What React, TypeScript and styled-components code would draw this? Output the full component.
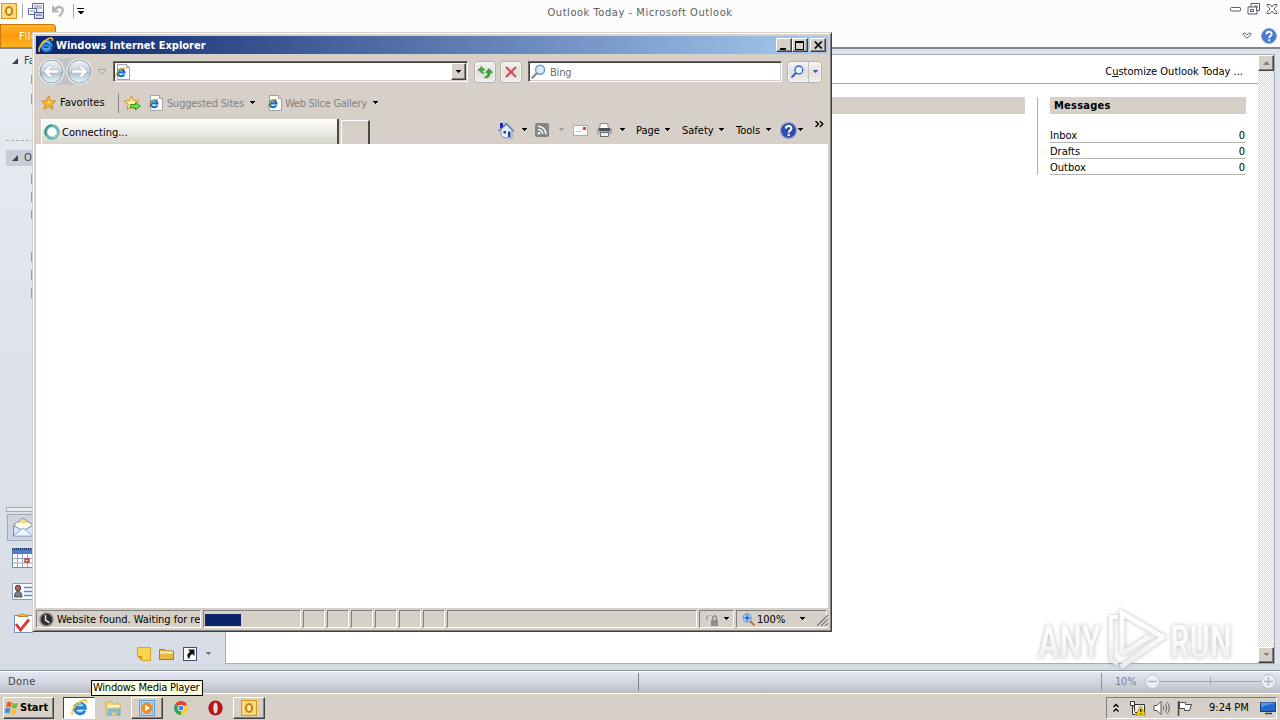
import React from 'react'
import styled, { createGlobalStyle, css } from 'styled-components'

const colors = {
    face: '#d6d0c8',
    shadow: '#808080',
    dark: '#404040',
    navy: '#0a246a',
    line: '#a9aeb4',
}

const GlobalStyle = createGlobalStyle`
    * {
        box-sizing: border-box;
    }
    body {
        margin: 0;
        overflow: hidden;
        font-family: 'DejaVu Sans Condensed', 'DejaVu Sans', sans-serif;
        font-stretch: condensed;
        font-size: 11px;
        line-height: 14px;
        color: #000;
    }
    svg {
        display: block;
        flex: none;
    }
`

const raised = css`
    border: 1px solid;
    border-color: #fff ${colors.dark} ${colors.dark} #fff;
    box-shadow: inset -1px -1px 0 ${colors.shadow};
`
const sunken = css`
    border: 1px solid;
    border-color: ${colors.shadow} #fff #fff ${colors.shadow};
`

/* ---------- shared ---------- */

const Text = styled.span<{ $w?: number; $ls?: number; $color?: string; $bold?: boolean; $drop?: boolean }>`
    flex: none;
    white-space: nowrap;
    overflow: visible;
    padding-top: ${({ $drop }) => ($drop ? 2 : 0)}px;
    width: ${({ $w }) => ($w ? `${$w}px` : 'auto')};
    letter-spacing: ${({ $ls }) => $ls ?? 0}px;
    color: ${({ $color }) => $color || '#000'};
    font-weight: ${({ $bold }) => ($bold ? 700 : 400)};
`
const Space = styled.div<{ $w?: number; $h?: number }>`
    flex: none;
    width: ${({ $w }) => $w || 0}px;
    height: ${({ $h }) => $h || 0}px;
`
const Caret: React.FC<{ color?: string }> = ({ color = '#000' }) => (
    <svg width="7" height="4" viewBox="0 0 7 4" shapeRendering="crispEdges">
        <path d="M0.5 0h6L3.5 3.5z" fill={color} />
    </svg>
)

/* ---------- icons ---------- */

const IeGlyph: React.FC<{ size: number }> = ({ size }) => (
    <svg width={size} height={size} viewBox="0 0 16 16">
        <path
            d="M12.9 10.6A4.700 4.700 0 1 1 13.2 8.400H4.6"
            fill="none"
            stroke="#2580d6"
            strokeWidth="3.200"
        />
        <path
            d="M11.9 9.8A4 4 0 0 1 5 10.5M5 6.3a4 4 0 0 1 6.8.4"
            fill="none"
            stroke="#7fcdfa"
            strokeWidth="1.100"
        />
        <path
            d="M1.6 14.6C-.6 12.2 4.1 4.8 9.7 2c3.4-1.7 5.6-1.4 4.4 1.7"
            fill="none"
            stroke="#f5c02e"
            strokeWidth="1.600"
        />
    </svg>
)

const IePage = () => (
    <svg width="15" height="16" viewBox="0 0 15 16">
        <path d="M2.5.5h9l3 3v12h-12z" fill="#fff" stroke="#9aa3ae" />
        <path d="M11.5.5v3h3" fill="#dde3ea" stroke="#9aa3ae" />
        <path d="M9.2 10.2A3.4 3.4 0 1 1 9.5 8.4H3.6" fill="none" stroke="#1c6fc4" strokeWidth="2.100" />
        <path d="M1 13C-.3 11 3 6.600 6.600 4.600c2-1 3.400-.8 2.800.8" fill="none" stroke="#e8b020" strokeWidth="1.1" />
    </svg>
)

const Star: React.FC<{ add?: boolean }> = ({ add }) => (
    <svg width={add ? 17 : 16} height="16" viewBox={add ? '0 0 17 16' : '0 0 16 16'}>
        <path
            d="M7.500 1l2 4.600 5 .4-3.800 3.300 1.200 5-4.400-2.700-4.400 2.700 1.200-5L.6 6l5-.4z"
            fill={add ? '#fff3ae' : '#f9b52c'}
            stroke="#d58a14"
        />
        {!add && <path d="M7.500 3l1.300 3.400 3.400.3-4.700 2z" fill="#ffe08a" />}
        {add && <path d="M6.500 9.500h5v-2l5 3.700-5 3.700v-2h-5z" fill="#6fda45" stroke="#2a9a1f" />}
    </svg>
)

const NavCircle: React.FC<{ flip?: boolean }> = ({ flip }) => (
    <svg width="27" height="27" viewBox="0 0 27 27">
        <defs>
            <linearGradient id="glass" x1="0" y1="0" x2="0" y2="1">
                <stop offset="0" stopColor="#f3f5f7" />
                <stop offset="0.48" stopColor="#c9d0d7" />
                <stop offset="0.52" stopColor="#adbac6" />
                <stop offset="1" stopColor="#e6f8fd" />
            </linearGradient>
        </defs>
        <circle cx="13.500" cy="13.500" r="13" fill="#f1f3f5" />
        <circle cx="13.500" cy="13.500" r="11.500" fill="url(#glass)" stroke="#8f9ba7" />
        <path
            d="M5.500 13.500l6.500-6.300 2 2-2.600 2.600H21v3.400h-9.600l2.600 2.600-2 2z"
            fill="#fff"
            stroke="#a3adb7"
            strokeWidth="0.6"
            transform={flip ? 'matrix(-1 0 0 1 27 0)' : undefined}
        />
    </svg>
)

const Refresh = () => (
    <svg width="16" height="14" viewBox="0 0 16 14">
        <path d="M.8 5.500l4-4.500v2.500h2.500v1.800H5.300c0 1.500.8 2.500 2 3.200-2.500.2-4-.8-4.200-3z" fill="#3fae35" stroke="#2a8523" strokeWidth=".5" />
        <path d="M15.500 7.500L12 3.500l-3.500 4h2.300c.1 1.800-.6 3.200-2 4.300h-1v1.200c3.500.2 5.500-2 5.500-5.500z" fill="#35a82c" stroke="#23761e" strokeWidth=".5" />
    </svg>
)

const Magnifier: React.FC<{ size: number; lens: string; stroke: string; ring: string; plus?: boolean; flip?: boolean }> = ({
    size,
    lens,
    stroke,
    ring,
    plus,
    flip,
}) => (
    <svg width={size} height={size} viewBox="0 0 14 14">
        <g transform={flip ? 'matrix(-1 0 0 1 14 0)' : undefined}>
            <path d="M5.300 8.700L1.200 12.800" stroke={stroke} strokeWidth="2.2" strokeLinecap="round" />
            <circle cx="8.500" cy="5.300" r="4.200" fill={lens} stroke={ring} strokeWidth="1.4" />
            {plus && <path d="M8.500 2.500v5.600M5.700 5.300h5.600" stroke="#1b5fc0" strokeWidth="1.600" />}
        </g>
    </svg>
)

const Home = () => (
    <svg width="17" height="17" viewBox="0 0 17 17">
        <path d="M3 7.500l5.500-5 5.500 6V16l-8-.5-3-2z" fill="#e6effa" stroke="#7d96c0" />
        <path d="M.5 9L8.200 1.500 16 9.500" fill="none" stroke="#6984b5" strokeWidth="1.400" />
        <path d="M2 1h3v3.500L3.500 6H2z" fill="#2222b8" />
        <path d="M5.500 9h2.500v2.500H5.500zM10 9.500h2.500v5.500H10z" fill="#233f93" />
    </svg>
)

const Feed = () => (
    <svg width="14" height="14" viewBox="0 0 14 14">
        <rect width="14" height="14" rx="2" fill="#858585" />
        <circle cx="4" cy="10.300" r="1.300" fill="#fff" />
        <path d="M3 6.500a4.500 4.500 0 0 1 4.600 4.600M3 3.300a7.800 7.800 0 0 1 7.900 7.900" fill="none" stroke="#fff" strokeWidth="1.500" />
    </svg>
)

const Mail = () => (
    <svg width="15" height="11" viewBox="0 0 15 11">
        <rect x=".5" y=".5" width="14" height="10" fill="#fafafa" stroke="#b3aca6" />
        <path d="M10 2h3v3h-3z" fill="#d6474b" />
        <path d="M3 6.500h5" stroke="#ccc" />
    </svg>
)

const Printer = () => (
    <svg width="17" height="16" viewBox="0 0 17 16">
        <path d="M4.500 1.500h7l1 5h-9z" fill="#fff" stroke="#8d8d8d" />
        <path d="M1 7q0-1 1-1h13q1 0 1 1v5H1z" fill="#a3a8ae" />
        <path d="M3 6h11v3H3z" fill="#4b5056" />
        <path d="M4.500 10.500h8v4h-8z" fill="#e9f0f7" stroke="#6b6f75" />
        <path d="M2 10.500h1.500" stroke="#d8edc8" />
    </svg>
)

const Help: React.FC<{ size: number; fill: string }> = ({ size, fill }) => (
    <svg width={size} height={size} viewBox="0 0 16 16">
        <circle cx="8" cy="8" r="7.400" fill={fill} stroke="#8899c4" />
        <path d="M5.500 6.200c0-3.300 5.200-3.200 5.200-.2 0 1.900-2.500 2-2.500 4" fill="none" stroke="#fff" strokeWidth="1.900" />
        <rect x="7.200" y="11.200" width="2" height="2" fill="#fff" />
    </svg>
)

const Spinner = () => (
    <svg width="16" height="16" viewBox="0 0 16 16">
        <circle cx="8" cy="8" r="6.200" fill="#fff" stroke="#6fb5ab" strokeWidth="3" />
        <path d="M8 1.200a6.800 6.800 0 0 0-6 10" fill="none" stroke="#2f8d84" strokeWidth="1.500" />
        <path d="M8 13.500A5.500 5.500 0 0 0 13.500 8" fill="none" stroke="#b5dfd6" strokeWidth="1.200" />
    </svg>
)

const OutlookIcon: React.FC<{ size: number }> = ({ size }) => (
    <svg width={size} height={size} viewBox="0 0 16 16">
        <rect x=".7" y=".7" width="14.600" height="14.600" fill="#fbd261" stroke="#e19a10" strokeWidth="1.400" />
        <rect x="2" y="2" width="12" height="12" fill="none" stroke="#fff0bd" />
        <ellipse cx="8" cy="8" rx="3" ry="3.900" fill="#fff3c9" stroke="#c97f06" strokeWidth="2" />
    </svg>
)

/* ---------- outlook ---------- */

const Desktop = styled.div`
    position: relative;
    width: 1280px;
    height: 720px;
    display: flex;
    flex-direction: column;
    overflow: hidden;
    background: #fcfcfc;
`
const TitleBar = styled.div`
    height: 24px;
    display: flex;
    align-items: center;
`
const QuickAccess = styled.div`
    width: 460px;
    display: flex;
    align-items: center;
    padding: 0 0 2px 1px;
`
const Divider = styled.div<{ $h: number; $color?: string }>`
    flex: none;
    width: 1px;
    height: ${({ $h }) => $h}px;
    background: ${({ $color }) => $color || '#a4a4a4'};
`
const AppTitle = styled.div`
    flex: 1;
    padding-top: 1px;
    text-align: center;
    color: #5c5c5c;
    letter-spacing: 0.56px;
`
const WindowControls = styled.div`
    width: 460px;
    display: flex;
    justify-content: flex-end;
    align-items: center;
    gap: 6px;
    padding: 0 2px 7px 0;
`
const Ribbon = styled.div`
    height: 25px;
    display: flex;
    justify-content: space-between;
    border-bottom: 2px solid #84888c;
`
const FileTab = styled.div`
    width: 56px;
    height: 23px;
    padding: 5px 0 0 18px;
    border: 1px solid #c9780a;
    border-bottom: 0;
    border-radius: 0 4px 0 0;
    background: linear-gradient(#ffb42c, #fb9a08 50%, #ffb321);
    color: #fff;
    letter-spacing: 0.5px;
`
const RibbonEnd = styled.div`
    display: flex;
    align-items: center;
    gap: 9px;
    padding-right: 3px;
`
const Body = styled.div`
    height: 615px;
    display: flex;
    background: #dce3ea;
`
const Nav = styled.div`
    width: 225px;
    display: flex;
    flex-direction: column;
    background: linear-gradient(#e9edf2, #dfe3eb 45%, #d8dce4);
`
const NavHeader = styled.div<{ $active?: boolean }>`
    height: 16px;
    margin-left: 6px;
    padding-left: 6px;
    display: flex;
    align-items: center;
    gap: 6px;
    color: #3b4351;
    background: ${({ $active }) => ($active ? '#c8cdd7' : 'transparent')};
`
const FolderMark = styled.div<{ $mt: number }>`
    width: 8px;
    height: 10px;
    margin: ${({ $mt }) => $mt}px 0 0 31px;
    background: #9a9da1;
`
const DashedLine = styled.div`
    margin: 36px 0 0 6px;
    border-top: 1px dashed #a2a7b0;
`
const Splitter = styled.div`
    height: 5px;
    margin: 209px 0 0 6px;
    border: 1px solid #a3a8b2;
    background: #e7eaef;
`
const NavButton = styled.div<{ $active?: boolean; $h: number }>`
    height: ${({ $h }) => $h}px;
    margin-left: 7px;
    padding-left: 4px;
    display: flex;
    align-items: center;
    border: 1px solid ${({ $active }) => ($active ? '#a0a7b5' : 'transparent')};
    background: ${({ $active }) => ($active ? '#cfd5df' : 'transparent')};
`
const NavFooter = styled.div`
    height: 20px;
    margin-top: 5px;
    padding-left: 137px;
    display: flex;
    align-items: center;
`
const Page = styled.div`
    flex: 1;
    margin-top: 5px;
    display: flex;
    background: #fff;
    border: 1px solid ${colors.line};
`
const PageMain = styled.div`
    flex: 1;
    display: flex;
    flex-direction: column;
`
const PageHeader = styled.div`
    height: 29px;
    padding: 5px 15px 0 0;
    display: flex;
    align-items: center;
    justify-content: flex-end;
    border-bottom: 1px solid #a8a8a8;
`
const Columns = styled.div`
    display: flex;
    padding: 13px 12px 0 0;
`
const CalendarBar = styled.div`
    flex: 1;
    height: 17px;
    margin-right: 12px;
    background: ${colors.face};
`
const Messages = styled.div`
    width: 209px;
    height: 78px;
    padding-left: 12px;
    border-left: 1px solid #b0b0b0;
`
const MessagesTitle = styled.div`
    height: 17px;
    margin-bottom: 13px;
    padding: 2px 4px;
    background: ${colors.face};
    font-weight: 700;
    letter-spacing: 0.25px;
`
const MessageRow = styled.div`
    height: 16px;
    padding: 2px 1px 0 0;
    display: flex;
    justify-content: space-between;
    border-bottom: 1px solid #b5b5b5;
    line-height: 14px;
`
const ScrollTrack = styled.div`
    width: 16px;
    display: flex;
    flex-direction: column;
    justify-content: space-between;
    background: repeating-conic-gradient(#fff 0 25%, #dcd7cf 0 50%) 0 0 / 2px 2px;
`
const ScrollButton = styled.div`
    ${raised}
    height: 16px;
    display: flex;
    align-items: center;
    justify-content: center;
    background: ${colors.face};
`
const Gap = styled.div`
    height: 6px;
    background: #d5dde3;
`
const StatusBar = styled.div`
    height: 24px;
    padding-left: 8px;
    display: flex;
    align-items: center;
    border-top: 1px solid #8d96a2;
    border-bottom: 1px solid #fff;
    box-shadow: inset 0 1px 0 #fff;
    background: linear-gradient(#e8eaf4, #d2d5e0 55%, #bbbcc2);
`
const Knob = styled.div`
    width: 15px;
    height: 15px;
    margin-bottom: 2px;
    border: 1px solid #b9bdc6;
    border-radius: 50%;
    display: flex;
    align-items: center;
    justify-content: center;
    background: #eceef2;
`
const ZoomTrack = styled.div`
    width: 101px;
    height: 8px;
    margin-bottom: 2px;
    display: flex;
    justify-content: center;
    background: linear-gradient(#a0a5af, #a0a5af) 0 50% / 100% 1px no-repeat;
`

/* ---------- taskbar ---------- */

const Taskbar = styled.div`
    height: 26px;
    padding: 2px 3px 1px 3px;
    display: flex;
    align-items: center;
    background: linear-gradient(#d4d0c0, ${colors.face} 40%);
`
const StartButton = styled.div`
    ${raised}
    width: 51px;
    height: 22px;
    display: flex;
    align-items: center;
    background: ${colors.face};
`
const TaskItem = styled.div<{ $kind?: 'active' | 'open' }>`
    width: 32px;
    height: 22px;
    margin-right: 2px;
    display: flex;
    align-items: center;
    justify-content: center;
    ${({ $kind }) =>
        $kind === 'open' &&
        css`
            ${raised}
        `}
    ${({ $kind }) =>
        $kind === 'active' &&
        css`
            background: #fff;
            border: 1px solid;
            border-color: ${colors.dark} #fff #fff ${colors.dark};
        `}
`
const Tray = styled.div`
    ${sunken}
    width: 171px;
    height: 22px;
    margin-left: auto;
    padding-left: 6px;
    display: flex;
    align-items: center;
`
const Tooltip = styled.div`
    position: absolute;
    left: 91px;
    top: 680px;
    width: 112px;
    height: 16px;
    padding-left: 1px;
    border: 1px solid #000;
    background: #ffffe1;
    white-space: nowrap;
`
const Watermark = styled.svg`
    position: absolute;
    left: 1030px;
    top: 604px;
    overflow: visible;
    filter: drop-shadow(0 0 2px rgba(0, 0, 0, 0.28));
`

/* ---------- internet explorer ---------- */

const Window = styled.div`
    position: absolute;
    left: 32px;
    top: 32px;
    width: 800px;
    height: 600px;
    padding: 2px;
    display: flex;
    flex-direction: column;
    border: 1px solid;
    border-color: ${colors.face} ${colors.dark} ${colors.dark} ${colors.face};
    box-shadow: inset 1px 1px 0 #fff, inset -1px -1px 0 ${colors.shadow};
    background: ${colors.face};
`
const Frame = styled.div`
    flex: 1;
    margin: 1px;
    display: flex;
    flex-direction: column;
`
const Caption = styled.div`
    height: 18px;
    padding: 0 2px;
    display: flex;
    align-items: center;
    background: linear-gradient(90deg, ${colors.navy}, #a6caf0);
`
const CaptionButtons = styled.div`
    margin-left: auto;
    display: flex;
`
const CaptionButton = styled.div`
    ${raised}
    width: 16px;
    height: 14px;
    display: flex;
    align-items: center;
    justify-content: center;
    background: ${colors.face};
`
const NavRow = styled.div`
    height: 35px;
    padding-left: 2px;
    display: flex;
    align-items: center;
`
const Circles = styled.div`
    display: flex;
    gap: 1px;
    border-radius: 14px;
    background: #c3c4c6;
`
const Field = styled.div<{ $w: number }>`
    width: ${({ $w }) => $w}px;
    height: 21px;
    padding-left: 1px;
    display: flex;
    align-items: center;
    border: 1px solid;
    border-color: #6d6965 #fff #fff #6d6965;
    box-shadow: inset 1px 1px 0 #403c3a, inset -1px -1px 0 ${colors.face};
    background: #fff;
`
const DropButton = styled.div`
    ${raised}
    width: 15px;
    height: 17px;
    margin: 0 1px 0 auto;
    display: flex;
    align-items: center;
    justify-content: center;
    background: ${colors.face};
`
const GlassButton = styled.div<{ $w: number }>`
    width: ${({ $w }) => $w}px;
    height: 22px;
    display: flex;
    align-items: center;
    justify-content: center;
    border: 1px solid #b5b0ab;
    border-radius: 3px;
    box-shadow: inset 0 0 0 1px #f6f6f6;
    background: linear-gradient(#f4f3f2, #e2e0de 50%, #eceef0);
`
const FavRow = styled.div`
    height: 28px;
    padding-left: 5px;
    display: flex;
    align-items: center;
`
const TabRow = styled.div`
    height: 27px;
    padding: 2px 0 0 5px;
    display: flex;
`
const Tab = styled.div`
    width: 298px;
    height: 25px;
    padding-left: 3px;
    display: flex;
    align-items: center;
    border-right: 2px solid #4c4846;
    box-shadow: inset 1px 1px 0 #fff;
    background: linear-gradient(#fdfdfc, #f0efec 40%, #d8d4cd);
`
const NewTab = styled.div`
    width: 29px;
    height: 24px;
    margin: 1px 0 0 2px;
    border: 1px solid #fff;
    border-right: 2px solid #4c4846;
    border-bottom: 0;
`
const Commands = styled.div`
    display: flex;
    align-items: center;
    margin-left: 128px;
    height: 22px;
`
const Viewport = styled.div`
    flex: 1;
    background: #fff;
`
const IeStatus = styled.div`
    height: 20px;
    padding-top: 2px;
    display: flex;
    gap: 2px;
`
const Cell = styled.div<{ $w: number }>`
    ${sunken}
    flex: none;
    width: ${({ $w }) => $w}px;
    height: 18px;
    display: flex;
    align-items: center;
`
const Progress = styled.div`
    width: 36px;
    height: 12px;
    margin: 1px 0 0 1px;
    background: ${colors.navy};
`

const Triangle = () => (
    <svg width="6" height="6" viewBox="0 0 6 6">
        <path d="M6 0v6H0z" fill="#3d424a" />
    </svg>
)

const Outlook = () => (
    <>
        <TitleBar>
            <QuickAccess>
                <OutlookIcon size={16} />
                <Space $w={5} />
                <Divider $h={14} />
                <Space $w={5} />
                <svg width="17" height="16" viewBox="0 0 17 16">
                    <path d="M4.500.5h11v9h-11z" fill="#f4f6fb" stroke="#5c6a92" />
                    <path d="M6 3h8M6 5h8" stroke="#7f8cb5" />
                    <path d="M.5 5.500h8v6h-8z" fill="#fff" stroke="#5c6a92" />
                    <path d="M2 8h5" stroke="#7f8cb5" />
                    <path d="M6.500 9.500h9v6h-9z" fill="#dbe2f3" stroke="#46557f" />
                    <path d="M8 12h6" stroke="#46557f" />
                </svg>
                <Space $w={6} />
                <svg width="14" height="14" viewBox="0 0 14 14">
                    <path d="M3 6.500C7 1 13 2.500 11.500 7.500c-.6 2-2 3.400-3.500 5" fill="none" stroke="#b4b4b4" strokeWidth="2.400" />
                    <path d="M1 1v7.500h7.500z" fill="#b4b4b4" />
                </svg>
                <Space $w={8} />
                <Divider $h={14} />
                <Space $w={3} />
                <svg width="7" height="8" viewBox="0 0 7 8" shapeRendering="crispEdges">
                    <path d="M0 1h7v1H0zM0 4h7L3.500 7.500z" fill="#000" />
                </svg>
            </QuickAccess>
            <AppTitle>Outlook Today - Microsoft Outlook</AppTitle>
            <WindowControls>
                <svg width="11" height="6" viewBox="0 0 11 6">
                    <rect x=".5" y="1.500" width="10" height="3.500" rx="1" fill="#fff" stroke="#555b66" />
                </svg>
                <svg width="13" height="12" viewBox="0 0 13 12">
                    <path d="M4 .5h8.500v7H10v3.500H1V4h3z" fill="#fff" stroke="#555b66" />
                    <path d="M4 4h5.500v4M3.500 6.500h3v2h-3zM7 3h3v2" fill="none" stroke="#555b66" />
                </svg>
                <svg width="12" height="10" viewBox="0 0 12 10">
                    <path d="M1 .5h3l2 2.500L8 .5h3v1L8 5l3 3.500v1H8L6 7 4 9.500H1v-1L4 5 1 1.500z" fill="#fff" stroke="#555b66" />
                </svg>
            </WindowControls>
        </TitleBar>
        <Ribbon>
            <FileTab>File</FileTab>
            <RibbonEnd>
                <svg width="10" height="7" viewBox="0 0 10 7">
                    <path d="M.8 2.200L2.500.8 5 2.800 7.500.8l1.700 1.400L5 6.200z" fill="#fff" stroke="#555b66" />
                </svg>
                <Help size={16} fill="#447cd0" />
            </RibbonEnd>
        </Ribbon>
        <Body>
            <Nav>
                <Space $h={4} />
                <NavHeader>
                    <Triangle />
                    <span>Favorites</span>
                </NavHeader>
                <FolderMark $mt={6} />
                <FolderMark $mt={10} />
                <DashedLine />
                <Space $h={9} />
                <NavHeader $active>
                    <Triangle />
                    <span>Outlook Data File</span>
                </NavHeader>
                <FolderMark $mt={8} />
                <FolderMark $mt={8} />
                <FolderMark $mt={8} />
                <FolderMark $mt={33} />
                <FolderMark $mt={8} />
                <FolderMark $mt={8} />
                <Splitter />
                <Space $h={2} />
                <NavButton $active $h={28}>
                    <svg width="23" height="20" viewBox="0 0 23 20">
                        <path d="M1.500 8L11 1l10 7v10.500h-19.500z" fill="#fcd98b" stroke="#7d94bb" />
                        <path d="M4 6h14v8H4z" fill="#fffdf0" />
                        <path d="M1.500 8.500l9.500 5 10-5v10.500h-19.500z" fill="#d5e6fa" stroke="#6d8fc4" />
                        <path d="M2 18.500l9-7.500 9 7.500" fill="#eef6ff" stroke="#8aabd9" />
                    </svg>
                </NavButton>
                <NavButton $h={36}>
                    <svg width="22" height="21" viewBox="0 0 22 21">
                        <path d="M.5.5h22v19H.5z" fill="#fff" stroke="#7288b5" />
                        <path d="M0 1h22v5H0z" fill="#4c7cc9" />
                        <path d="M0 1h22" stroke="#24355f" strokeDasharray="1 1" strokeWidth="2" />
                        <path d="M5.500 6v13M10.500 6v13M15.500 6v13M1 10.500h21M1 15h21" stroke="#94a8ce" />
                        <path d="M13 11h4v3h-4z" fill="none" stroke="#c9362c" strokeWidth="1.400" />
                    </svg>
                </NavButton>
                <NavButton $h={30}>
                    <svg width="22" height="17" viewBox="0 0 22 17">
                        <path d="M.5.5h22v16H.5z" fill="#f8fbff" stroke="#8399bd" />
                        <circle cx="6" cy="5" r="2.700" fill="#b0694e" stroke="#5d3b31" />
                        <path d="M2.500 14c0-8 7.500-8 7.500 0z" fill="#777d86" stroke="#4d525a" />
                        <path d="M12 4.500h9M12 8.500h9M12 12.500h9" stroke="#5b8ccb" strokeWidth="1.300" />
                    </svg>
                </NavButton>
                <NavButton $h={34}>
                    <svg width="22" height="20" viewBox="0 0 22 20">
                        <path d="M2.500 2.500h18v17h-18z" fill="#fff" stroke="#7990bd" />
                        <path d="M6 3.500h10V2h-3.500L11 .5 9.500 2H6z" fill="#f3c657" stroke="#bd8a21" />
                        <path d="M4 11l4.500 6L17 6.500" fill="none" stroke="#d93a30" strokeWidth="2.800" />
                    </svg>
                </NavButton>
                <NavFooter>
                    <svg width="14" height="14" viewBox="0 0 14 14">
                        <path d="M.5.500h13v13H5L.500 9z" fill="#fbd54f" stroke="#d9a520" />
                        <path d="M.500 9H5v4.500z" fill="#d79113" />
                    </svg>
                    <Space $w={8} />
                    <svg width="15" height="12" viewBox="0 0 15 12">
                        <path d="M.5 1.500h5l1 1.500h8v8.500H.500z" fill="#e9b93c" stroke="#a37c24" />
                        <path d="M1 4.500h13" stroke="#fff0b5" strokeWidth="2" />
                    </svg>
                    <Space $w={9} />
                    <svg width="14" height="14" viewBox="0 0 14 14">
                        <rect x=".5" y=".5" width="13" height="13" fill="#fff" stroke="#3c4f84" />
                        <path d="M5 2.500h6.500V9L9.300 7C7 8.500 6.500 9.500 6.500 12 3.500 10 3.500 7 7 4.700z" fill="#111" />
                    </svg>
                    <Space $w={8} />
                    <Caret color="#70757d" />
                </NavFooter>
            </Nav>
            <Page>
                <PageMain>
                    <PageHeader>
                        <Text>
                            C<u>u</u>stomize Outlook Today ...
                        </Text>
                    </PageHeader>
                    <Columns>
                        <CalendarBar />
                        <Messages>
                            <MessagesTitle>Messages</MessagesTitle>
                            {['Inbox', 'Drafts', 'Outbox'].map((name) => (
                                <MessageRow key={name}>
                                    <Text>{name}</Text>
                                    <span>0</span>
                                </MessageRow>
                            ))}
                        </Messages>
                    </Columns>
                </PageMain>
                <ScrollTrack>
                    <ScrollButton>
                        <svg width="7" height="4" viewBox="0 0 7 4">
                            <path d="M0 4l3.500-4L7 4z" fill="#858078" />
                        </svg>
                    </ScrollButton>
                    <ScrollButton>
                        <Caret color="#858078" />
                    </ScrollButton>
                </ScrollTrack>
            </Page>
            <Space $w={5} />
        </Body>
        <Gap />
        <StatusBar>
            <Text $w={630} $ls={0.4} $color="#444">
                Done
            </Text>
            <Divider $h={18} $color="#7b808b" />
            <Space $w={462} />
            <Divider $h={18} $color="#8f939d" />
            <Space $w={13} />
            <Text $w={30} $ls={-0.2} $color="#777c86">
                10%
            </Text>
            <Knob>
                <svg width="9" height="9" viewBox="0 0 9 9">
                    <path d="M0 4.500h9" stroke="#aeb2ba" strokeWidth="1.400" />
                </svg>
            </Knob>
            <ZoomTrack>
                <Divider $h={8} $color="#a0a5af" />
            </ZoomTrack>
            <Knob>
                <svg width="9" height="9" viewBox="0 0 9 9">
                    <path d="M0 4.500h9M4.500 0v9" stroke="#aeb2ba" strokeWidth="1.400" />
                </svg>
            </Knob>
        </StatusBar>
    </>
)

const Explorer = () => (
    <Window>
        <Frame>
            <Caption>
                <IeGlyph size={16} />
                <Space $w={2} />
                <Text $bold $color="#fff" $drop>
                    Windows Internet Explorer
                </Text>
                <CaptionButtons>
                    <CaptionButton>
                        <svg width="10" height="9" viewBox="0 0 10 9">
                            <path d="M1 7h6v2H1z" fill="#000" />
                        </svg>
                    </CaptionButton>
                    <CaptionButton>
                        <svg width="10" height="9" viewBox="0 0 10 9" shapeRendering="crispEdges">
                            <path d="M0 0h9v9H0zM1 2v6h7V2z" fill="#000" fillRule="evenodd" />
                        </svg>
                    </CaptionButton>
                    <Space $w={2} />
                    <CaptionButton>
                        <svg width="9" height="8" viewBox="0 0 9 8">
                            <path d="M.8.5l7 7M7.800.5l-7 7" stroke="#000" strokeWidth="1.700" />
                        </svg>
                    </CaptionButton>
                </CaptionButtons>
            </Caption>
            <NavRow>
                <Circles>
                    <NavCircle />
                    <NavCircle flip />
                </Circles>
                <Space $w={5} />
                <svg width="8" height="6" viewBox="0 0 8 6">
                    <path d="M.5.500h7L4 5z" fill="#e4e1dd" stroke="#aaa49e" />
                </svg>
                <Space $w={7} />
                <Field $w={355}>
                    <IePage />
                    <DropButton>
                        <Caret />
                    </DropButton>
                </Field>
                <Space $w={6} />
                <GlassButton $w={22}>
                    <Refresh />
                </GlassButton>
                <Space $w={4} />
                <GlassButton $w={22}>
                    <svg width="12" height="12" viewBox="0 0 12 12">
                        <path d="M1 1l10 10M11 1L1 11" stroke="#cf4a52" strokeWidth="2" />
                    </svg>
                </GlassButton>
                <Space $w={6} />
                <Field $w={254}>
                    <Space $w={1} />
                    <Magnifier size={15} lens="#d9edf9" ring="#7e97ab" stroke="#8d8d8d" />
                    <Space $w={4} />
                    <Text $color="#6d6d6d" $ls={-0.2} $drop>
                        Bing
                    </Text>
                </Field>
                <Space $w={5} />
                <GlassButton $w={35}>
                    <Magnifier size={13} lens="#e9f4ff" ring="#2a62d0" stroke="#2a62d0" />
                    <Space $w={4} />
                    <Divider $h={20} $color="#c3c0bd" />
                    <Space $w={3} />
                    <Caret color="#2866b5" />
                </GlassButton>
            </NavRow>
            <FavRow>
                <Star />
                <Space $w={3} />
                <Text $w={58}>Favorites</Text>
                <Divider $h={20} $color="#8b8783" />
                <Space $w={5} />
                <Star add />
                <Space $w={7} />
                <IePage />
                <Space $w={4} />
                <Text $w={82} $ls={-0.2} $color="#85817c" $drop>
                    Suggested Sites
                </Text>
                <Caret />
                <Space $w={11} />
                <IePage />
                <Space $w={3} />
                <Text $w={87} $ls={-0.27} $color="#85817c" $drop>
                    Web Slice Gallery
                </Text>
                <Caret />
            </FavRow>
            <TabRow>
                <Tab>
                    <Spinner />
                    <Space $w={2} />
                    <Text $drop>Connecting...</Text>
                </Tab>
                <NewTab />
                <Commands>
                    <Home />
                    <Space $w={6} />
                    <Caret />
                    <Space $w={7} />
                    <Feed />
                    <Space $w={9} />
                    <Caret color="#a39e97" />
                    <Space $w={8} />
                    <Mail />
                    <Space $w={8} />
                    <Printer />
                    <Space $w={6} />
                    <Caret />
                    <Space $w={10} />
                    <Text $w={28} $drop>
                        Page
                    </Text>
                    <Caret />
                    <Space $w={11} />
                    <Text $w={36} $drop>
                        Safety
                    </Text>
                    <Caret />
                    <Space $w={11} />
                    <Text $w={29} $drop>
                        Tools
                    </Text>
                    <Caret />
                    <Space $w={8} />
                    <Help size={17} fill="#2f4fae" />
                    <Caret />
                    <Space $w={11} />
                    <svg width="9" height="18" viewBox="0 0 9 18">
                        <path d="M.5 0l3 3-3 3M4.800 0l3 3-3 3" fill="none" stroke="#000" strokeWidth="1.400" />
                    </svg>
                </Commands>
            </TabRow>
            <Viewport />
            <IeStatus>
                <Cell $w={165}>
                    <Space $w={2} />
                    <svg width="15" height="15" viewBox="0 0 15 15">
                        <circle cx="7.500" cy="7.500" r="6.500" fill="#2e2e2e" stroke="#8d8d8d" strokeWidth="1.500" />
                        <path d="M6.500 3v5l4 2.800" fill="none" stroke="#e8e8e8" strokeWidth="1.500" />
                    </svg>
                    <Space $w={3} />
                    <Text $ls={-0.03} $drop>
                        Website found. Waiting for re
                    </Text>
                </Cell>
                <Cell $w={98}>
                    <Progress />
                </Cell>
                {[0, 1, 2, 3, 4, 5].map((i) => (
                    <Cell key={i} $w={22} />
                ))}
                <Cell $w={250} />
                <Cell $w={35}>
                    <Space $w={4} />
                    <svg width="15" height="15" viewBox="0 0 15 15">
                        <path d="M0 7a5 5 0 0 1 9-3l-4 1v6z" fill="#b5b5b5" stroke="#fff" strokeWidth=".6" />
                        <path d="M8.500 8V6a2 2 0 0 1 4 0v2" fill="none" stroke="#888" strokeWidth="1.400" />
                        <path d="M7 8h7v6H7z" fill="#8d8d8d" />
                    </svg>
                    <Space $w={4} />
                    <Caret />
                </Cell>
                <Cell $w={91}>
                    <Space $w={5} />
                    <Magnifier size={13} lens="#b9dcff" ring="#6aa0dd" stroke="#a9783d" plus flip />
                    <Space $w={2} />
                    <Text $w={42} $drop>
                        100%
                    </Text>
                    <Caret />
                    <Space $w={11} />
                    <svg width="12" height="16" viewBox="0 0 12 16">
                        <path d="M0 15L11 4M4 15l7-7M8 15l3-3" stroke="#817d78" strokeWidth="1.500" />
                        <path d="M1.500 15.500L12 5M5.500 15.500L12 9" stroke="#fff" strokeWidth=".7" />
                    </svg>
                </Cell>
            </IeStatus>
        </Frame>
    </Window>
)

const TaskbarView = () => (
    <Taskbar>
        <StartButton>
            <svg width="16" height="16" viewBox="0 0 17 16">
                <path d="M3.500 2C5 1 7 1 8.300 2L7 7.500c-1.500-1-3-1-5-.3z" fill="#ee5a24" />
                <path d="M9.300 2.500c2 1 3.500 1 5.700 0L13.500 8c-2 1-3.700.8-5.500-.2z" fill="#7fb93a" />
                <path d="M1.800 8.300c2-.8 3.500-.6 5 .3l-1.300 5.200c-1.500-1-3-1-5-.3z" fill="#3d8ddb" />
                <path d="M7.800 9c2 1 3.500 1 5.500.2L11.800 14.500c-2 1-3.500.8-5.300-.2z" fill="#fbc22d" />
            </svg>
            <Text $bold>Start</Text>
        </StartButton>
        <Space $w={9} />
        <TaskItem $kind="active">
            <IeGlyph size={17} />
        </TaskItem>
        <TaskItem>
            <svg width="17" height="16" viewBox="0 0 17 16">
                <path d="M1 2h6l1 2h7v11H1z" fill="#f3db83" stroke="#d2b04e" />
                <path d="M3 6h12" stroke="#fff6cf" strokeWidth="2" />
                <path d="M3 15V9h12v6h-3v-3H6v3z" fill="#7fc3ea" stroke="#4d9ccd" strokeWidth=".6" />
            </svg>
        </TaskItem>
        <TaskItem $kind="open">
            <svg width="16" height="16" viewBox="0 0 16 16">
                <rect x=".5" y=".5" width="15" height="15" fill="#bcdcf5" stroke="#5b9bd3" />
                <rect x="2.500" y="2.500" width="11" height="11" fill="none" stroke="#7db4e2" />
                <circle cx="8" cy="8" r="5.500" fill="#f08a1c" />
                <path d="M6 4.800l5 3.200-5 3.200z" fill="#fff" />
            </svg>
        </TaskItem>
        <TaskItem>
            <svg width="14" height="14" viewBox="0 0 14 14">
                <path d="M7 7L.95 3.500A7 7 0 0 1 13.060 3.500z" fill="#e34133" />
                <path d="M7 7l6.060-3.500A7 7 0 0 1 7 14z" fill="#fccb30" />
                <path d="M7 7v7A7 7 0 0 1 .95 3.500z" fill="#34a452" />
                <circle cx="7" cy="7" r="3.300" fill="#fff" />
                <circle cx="7" cy="7" r="2.500" fill="#4285e8" />
            </svg>
        </TaskItem>
        <TaskItem>
            <svg width="15" height="16" viewBox="0 0 15 16">
                <ellipse cx="7.500" cy="8" rx="7.200" ry="7.500" fill="#b5161b" />
                <ellipse cx="7.500" cy="8" rx="2.200" ry="5.500" fill="#e4dcd6" />
            </svg>
        </TaskItem>
        <TaskItem $kind="open">
            <OutlookIcon size={16} />
        </TaskItem>
        <Tray>
            <svg width="6" height="10" viewBox="0 0 6 10">
                <path d="M.5 4L3 1.500 5.500 4M.5 8.500L3 6l2.500 2.500" fill="none" stroke="#000" strokeWidth="1.400" />
            </svg>
            <Space $w={10} />
            <svg width="18" height="16" viewBox="0 0 18 16">
                <path d="M5.500 4.500h10v8h-10z" fill="#e9e9e9" stroke="#333" />
                <path d="M1.500 1.500h4v4h-4zM3.500 5.500v9h3" fill="#fff" stroke="#333" />
                <path d="M11.500 6l5 9h-9.500z" fill="#ffe100" stroke="#8e7900" strokeWidth=".7" />
                <path d="M11.800 9v3M11.800 13v1" stroke="#000" strokeWidth="1.200" />
            </svg>
            <Space $w={6} />
            <svg width="17" height="16" viewBox="0 0 17 16">
                <path d="M1 5.500h3l4-4v13l-4-4H1z" fill="#fff" stroke="#555" />
                <path d="M10 5.500a4 4 0 0 1 0 5M12 3.500a7 7 0 0 1 0 9M14 2a9 9 0 0 1 0 12" fill="none" stroke="#666" />
            </svg>
            <Space $w={6} />
            <svg width="17" height="16" viewBox="0 0 17 16">
                <path d="M2.500 1v15" stroke="#444" strokeWidth="1.500" />
                <path d="M3.500 2.500h6v2h6l-2 6h-5v-2h-5z" fill="#fff" stroke="#444" />
            </svg>
            <Space $w={16} />
            <Text $w={51}>9:24 PM</Text>
            <svg width="16" height="14" viewBox="0 0 16 14">
                <rect x=".5" y="1.500" width="15" height="9" fill="#2569c7" stroke="#1a3f78" />
                <path d="M1 6l14-4v-.500H1z" fill="#5597e2" />
                <path d="M5 12.500h7" stroke="#35435d" strokeWidth="1.500" />
            </svg>
        </Tray>
    </Taskbar>
)

const AnyRun = () => (
    <Watermark width="230" height="84" viewBox="0 0 230 84">
        <defs>
            <linearGradient id="fade" x1="0" y1="0" x2="0" y2="1">
                <stop offset="0" stopColor="#ffffff" />
                <stop offset="0.5" stopColor="#fafafa" />
                <stop offset="1" stopColor="#e9e9e9" />
            </linearGradient>
        </defs>
        <g fill="url(#fade)" fontFamily="Roboto, sans-serif" fontWeight="500" fontSize="47">
            <text x="8" y="54" textLength="63" lengthAdjust="spacingAndGlyphs">
                ANY
            </text>
            <text x="140" y="54" textLength="62" lengthAdjust="spacingAndGlyphs">
                RUN
            </text>
        </g>
        <path d="M88 13h-7v43l7 4" fill="none" stroke="url(#fade)" strokeWidth="4" />
        <path
            d="M92 50V9l41 24-42 30M92 50l27-17"
            fill="none"
            stroke="url(#fade)"
            strokeWidth="5"
        />
    </Watermark>
)

export default function App() {
    return (
        <Desktop>
            <GlobalStyle />
            <Outlook />
            <TaskbarView />
            <Explorer />
            <Tooltip>
                <Text $ls={-0.23}>Windows Media Player</Text>
            </Tooltip>
            <AnyRun />
        </Desktop>
    )
}
